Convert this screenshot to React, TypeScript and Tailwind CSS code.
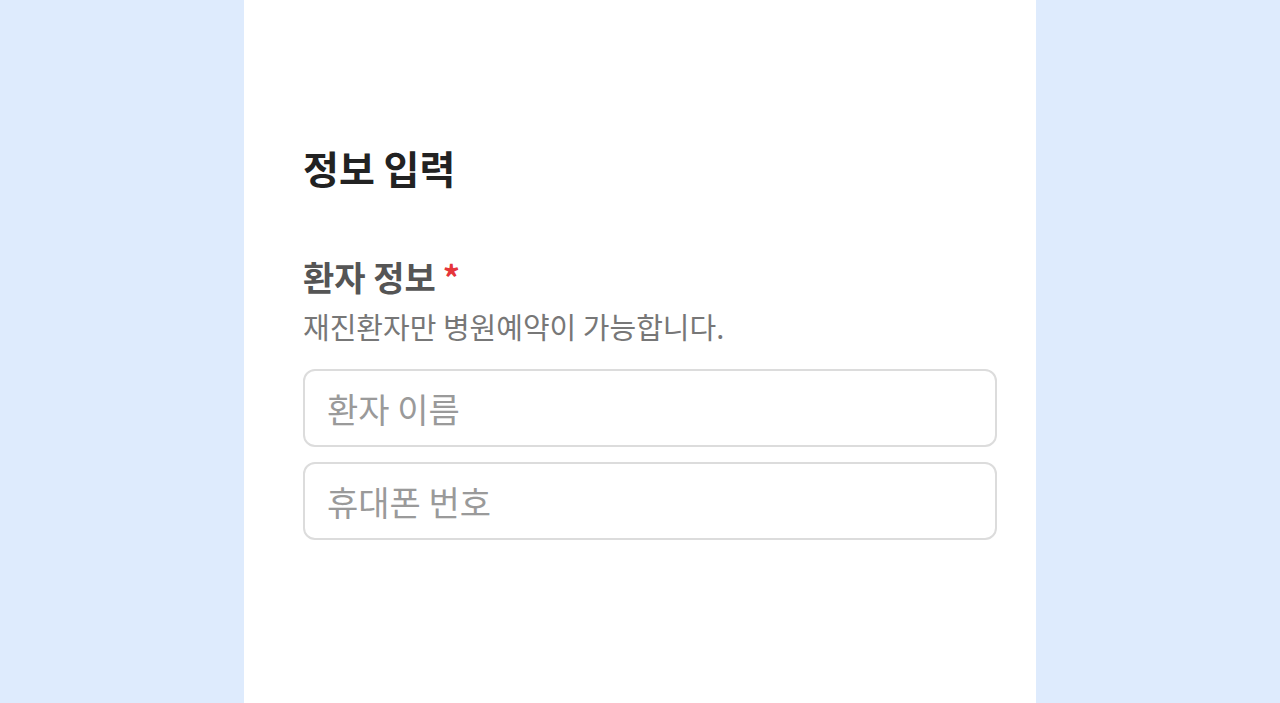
import { useState } from "react";

export default function App() {
  const [name, setName] = useState("");
  const [phone, setPhone] = useState("");

  const font = { fontFamily: "'Noto Sans CJK KR', 'Noto Sans', sans-serif" };

  return (
    <div className="min-h-screen bg-[#deebfd] flex justify-center" style={font}>
      <div className="w-[792px] min-h-[703px] bg-white pl-[59px] pr-[39px] pt-[140px]">
        <h1 className="text-[39px] leading-[54px] font-bold text-[#222]">정보 입력</h1>

        <div className="mt-[60px]">
          <p className="text-[34px] leading-[46px] font-semibold text-[#555]">
            환자 정보<span className="ml-[7px] text-[#e5353b]">*</span>
          </p>
          <p className="text-[29px] leading-[40px] text-[#777] mt-[6px]">재진환자만 병원예약이 가능합니다.</p>

          <div className="mt-[23px] flex flex-col gap-[15px]">
            <input
              value={name}
              onChange={e => setName(e.target.value)}
              placeholder="환자 이름"
              className="h-[78px] w-full px-[22px] text-[34px] text-[#333] placeholder:text-[#9a9a9a] border-2 border-[#dcdcdc] rounded-[12px] outline-none"
              style={font}
            />
            <input
              value={phone}
              onChange={e => setPhone(e.target.value)}
              placeholder="휴대폰 번호"
              className="h-[78px] w-full px-[22px] text-[34px] text-[#333] placeholder:text-[#9a9a9a] border-2 border-[#dcdcdc] rounded-[12px] outline-none"
              style={font}
            />
          </div>
        </div>
      </div>
    </div>
  );
}
